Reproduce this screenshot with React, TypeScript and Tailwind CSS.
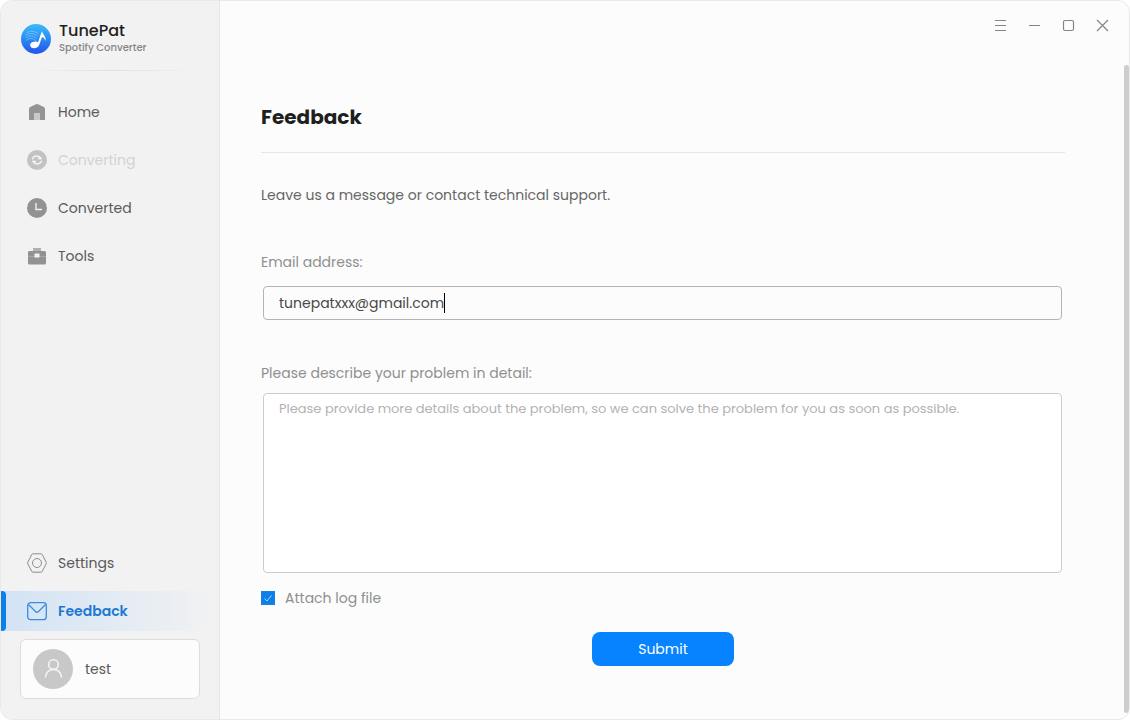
import { useState } from "react";
import type { ReactNode } from "react";

interface NavItemProps {
  label: string;
  icon: ReactNode;
  active?: boolean;
  disabled?: boolean;
}

const Logo = () => (
  <svg viewBox="0 0 30 30" className="w-[30px] h-[30px] shrink-0" aria-hidden="true">
    <defs>
      <linearGradient id="logo-fill" x1="0" y1="0" x2="0" y2="1">
        <stop offset="0" stopColor="#3cbcf8" />
        <stop offset="0.5" stopColor="#2a8af4" />
        <stop offset="1" stopColor="#2452ee" />
      </linearGradient>
    </defs>
    <circle cx="15" cy="15" r="15" fill="url(#logo-fill)" />
    <g fill="none" stroke="#7cc4fa" strokeWidth="0.8" strokeLinecap="round">
      <path d="M6 8.500C10 6.500 14 7 17 9.500" />
      <path d="M5 11C9 8.500 13 9 16.500 12" />
      <path d="M5 13.500C8.500 11 12.500 11.500 15.500 14.500" />
      <path d="M5.500 16C8.500 13.500 12 14 14.500 16.500" />
    </g>
    <ellipse cx="13.5" cy="20.8" rx="4.4" ry="3.2" fill="#fff" transform="rotate(-12 13.500 20.800)" />
    <path d="M16.200 20.500L21 7C21.500 10.500 25.500 12.500 24.500 17C23.800 14.800 22.500 13.500 21 13L18 21.500Z" fill="#fff" />
  </svg>
);

const HomeIcon = () => (
  <svg viewBox="0 0 20 20" className="w-5 h-5" aria-hidden="true">
    <path d="M2 7Q2 5.600 3.200 5L9 2.300Q10 1.800 11 2.300L16.800 5Q18 5.600 18 7V18H2Z" fill="#949494" />
    <path d="M7 11H13V18H7Z" fill="#c9c9c9" />
  </svg>
);

const ConvertingIcon = () => (
  <svg viewBox="0 0 20 20" className="w-5 h-5" aria-hidden="true">
    <circle cx="10" cy="10" r="10" fill="#c2c2c2" />
    <g fill="none" stroke="#f4f4f4" strokeWidth="1.5" strokeLinecap="round" strokeLinejoin="round">
      <path d="M5.500 8.700C7 5.500 12 5 14.200 8.700L11.500 8.500" />
      <path d="M14.500 11.300C13 14.500 8 15 5.800 11.300L8.500 11.500" />
    </g>
  </svg>
);

const ConvertedIcon = () => (
  <svg viewBox="0 0 20 20" className="w-5 h-5" aria-hidden="true">
    <circle cx="10" cy="10" r="10" fill="#929292" />
    <path d="M9 5V11.500H15" fill="none" stroke="#f2f2f2" strokeWidth="1.4" />
  </svg>
);

const ToolsIcon = () => (
  <svg viewBox="0 0 20 20" className="w-5 h-5" aria-hidden="true">
    <path d="M6 2H14V5H6Z" fill="#b0b0b0" />
    <rect x="1" y="5" width="18" height="13.500" rx="1.500" fill="#929292" />
    <path d="M1 10.500H19" stroke="#a8a8a8" strokeWidth="1" />
    <rect x="7.500" y="7.500" width="5" height="4" rx="0.500" fill="#f2f2f2" />
  </svg>
);

const SettingsIcon = () => (
  <svg viewBox="0 0 20 20" className="w-5 h-5" fill="none" stroke="#8c8c8c" aria-hidden="true">
    <path d="M6 0.800H14Q14.800 0.800 15.200 1.500L19.200 9.200Q19.600 10 19.200 10.800L15.200 18.500Q14.800 19.200 14 19.200H6Q5.200 19.200 4.800 18.500L0.800 10.800Q0.400 10 0.800 9.200L4.800 1.500Q5.200 0.800 6 0.800Z" />
    <circle cx="10" cy="10" r="4.500" />
  </svg>
);

const MailIcon = () => (
  <svg viewBox="0 0 20 20" className="w-5 h-5" fill="none" stroke="#3a8cdc" strokeWidth="1.300" aria-hidden="true">
    <rect x="0.700" y="1.700" width="18.600" height="17" rx="3" />
    <path d="M1.500 3.500L8.500 10.500Q10 12 11.500 10.500L18.500 3.500" />
  </svg>
);

const NavItem = ({ label, icon, active, disabled }: NavItemProps) => (
  <button
    type="button"
    disabled={disabled}
    aria-current={active ? "page" : undefined}
    className={`flex items-center w-full h-10 text-left ${
      active
        ? "bg-linear-to-r from-[#d2e3f5] to-[#f2f2f2] font-semibold text-[#1e78d2]"
        : disabled
          ? "text-[#d2d2d2]"
          : "text-[#5a5a5a]"
    }`}
  >
    <span className={`w-[5px] h-full mr-[21px] rounded-r-sm ${active ? "bg-[#0d7fe8]" : ""}`} />
    {icon}
    <span className="ml-[11px] text-sm">{label}</span>
  </button>
);

const windowButtons = [
  { label: "Menu", path: "M1 1.500H12M1 6.500H12M1 11.500H12" },
  { label: "Minimize", path: "M1 6.500H12" },
  { label: "Maximize", path: "M3 1.500H10Q11.500 1.500 11.500 3V10Q11.500 11.500 10 11.500H3Q1.500 11.500 1.500 10V3Q1.500 1.500 3 1.500Z" },
  { label: "Close", path: "M1 1L12 12M12 1L1 12" },
];

const App = () => {
  const [email, setEmail] = useState("tunepatxxx@gmail.com");
  const [message, setMessage] = useState("");
  const [attachLog, setAttachLog] = useState(true);

  return (
    <div className="bg-white font-['Poppins','Inter',sans-serif] text-sm">
      <div className="flex min-h-screen rounded-xl border border-[#e9e9e9] bg-[#fcfcfc] overflow-hidden">
        {/* Sidebar */}
        <aside className="flex flex-col w-[219px] shrink-0 bg-[#f2f2f2] border-r border-[#e6e6e6]">
          <div className="flex items-center gap-2 pl-5 pt-5">
            <Logo />
            <div className="pb-0.5">
              <div className="text-base leading-5 font-medium text-[#1f1f1f]">TunePat</div>
              <div className="text-[10px] leading-3.5 font-medium text-[#858585]">Spotify Converter</div>
            </div>
          </div>
          <div className="h-px mx-6 mt-[13px] bg-linear-to-r from-transparent via-[#e0e0e0] to-transparent" />

          <nav className="flex flex-col flex-1 gap-2 pt-[21px] pb-2">
            <NavItem label="Home" icon={<HomeIcon />} />
            <NavItem label="Converting" icon={<ConvertingIcon />} disabled />
            <NavItem label="Converted" icon={<ConvertedIcon />} />
            <NavItem label="Tools" icon={<ToolsIcon />} />
            <div className="flex flex-col gap-2 mt-auto">
              <NavItem label="Settings" icon={<SettingsIcon />} />
              <NavItem label="Feedback" icon={<MailIcon />} active />
            </div>
          </nav>

          <button
            type="button"
            className="flex items-center gap-3 h-15 mx-[19px] mb-5 px-3 rounded-md border border-[#dcdcdc] bg-[#fcfcfc] text-[#5a5a5a]"
          >
            <svg viewBox="0 0 40 40" className="w-10 h-10" aria-hidden="true">
              <circle cx="20" cy="20" r="20" fill="#c8c8c8" />
              <g fill="none" stroke="#f3f3f3" strokeWidth="1.600" strokeLinecap="round">
                <circle cx="20.500" cy="15.500" r="4.800" />
                <path d="M12.500 28C13 18 28 18 28.500 28" />
              </g>
            </svg>
            test
          </button>
        </aside>

        {/* Main area */}
        <main className="flex flex-col flex-1 min-w-0">
          <header className="flex justify-end h-16 pt-2 pr-2.5">
            {windowButtons.map((btn) => (
              <button key={btn.label} type="button" aria-label={btn.label} className="flex items-center justify-center w-[34px] h-8">
                <svg viewBox="0 0 13 13" className="w-[13px] h-[13px]" fill="none" stroke="#858585" strokeWidth="1.200" aria-hidden="true">
                  <path d={btn.path} />
                </svg>
              </button>
            ))}
          </header>

          <div className="flex flex-1">
            <form className="flex flex-col flex-1 min-w-0 pl-[41px] pr-[59px] pt-9" onSubmit={(e) => e.preventDefault()}>
              <h1 className="pb-[19px] border-b border-[#e6e6e6] text-xl leading-8 font-bold text-[#1f1f1f]">Feedback</h1>
              <p className="mt-8 text-[#666666]">Leave us a message or contact technical support.</p>

              <label htmlFor="email" className="mt-[47px] text-[#8f8f8f]">Email address:</label>
              <div className="flex items-center h-[34px] mt-3.5 ml-0.5 mr-[3px] px-[15px] rounded border border-[#b4b4b4] bg-[#fcfcfc]">
                <input
                  id="email"
                  type="email"
                  value={email}
                  onChange={(e) => setEmail(e.target.value)}
                  className="[field-sizing:content] max-w-full text-[#484848] outline-none caret-transparent"
                />
                <span className="w-px h-5 bg-black" />
              </div>

              <label htmlFor="message" className="mt-[43px] text-[#8f8f8f]">Please describe your problem in detail:</label>
              <textarea
                id="message"
                value={message}
                onChange={(e) => setMessage(e.target.value)}
                placeholder="Please provide more details about the problem, so we can solve the problem for you as soon as possible."
                className="h-45 mt-2.5 ml-0.5 mr-[3px] px-[15px] py-[5px] rounded border border-[#cccccc] bg-white text-[13px] leading-5 placeholder:text-[#b2b2b2] resize-none outline-none"
              />

              <label className="flex items-center gap-2.5 mt-[15px] self-start text-[#8f8f8f]">
                <span className="grid">
                  <input
                    type="checkbox"
                    checked={attachLog}
                    onChange={(e) => setAttachLog(e.target.checked)}
                    className="peer col-start-1 row-start-1 appearance-none w-3.5 h-3.5 border border-[#1f7fe0] checked:bg-[#0d7fe8]"
                  />
                  <svg viewBox="0 0 14 14" className="col-start-1 row-start-1 w-3.5 h-3.5 invisible peer-checked:visible pointer-events-none" aria-hidden="true">
                    <path d="M3.500 7.500L6 10L10.500 4.500" fill="none" stroke="#a9d2f8" />
                  </svg>
                </span>
                Attach log file
              </label>

              <button type="submit" className="self-center w-[142px] h-[34px] mt-6 rounded-lg bg-[#0783ff] text-white">
                Submit
              </button>
            </form>
            <div className="w-[5px] mb-1.5 rounded-sm bg-[#cdcdcd]" />
          </div>
        </main>
      </div>
    </div>
  );
};

export default App;
